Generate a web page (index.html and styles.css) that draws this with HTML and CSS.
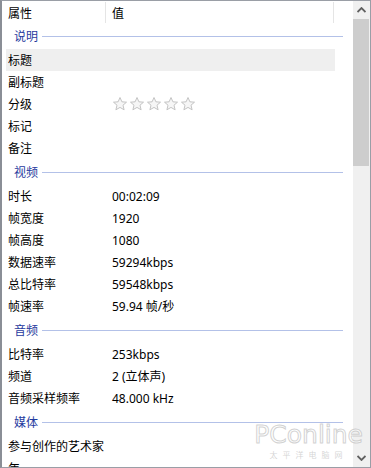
FILE: index.html
```html
<!DOCTYPE html>
<html lang="zh-CN">
<head>
  <meta charset="UTF-8">
  <title>属性 - 详细信息</title>
  <link rel="stylesheet" href="styles.css">
</head>
<body>
  <div class="details">
    <div class="list">
      <!-- 表头 -->
      <div class="list-header">
        <div class="col-name">属性</div>
        <div class="col-value">值</div>
      </div>

      <div class="group"><span>说明</span><i></i></div>
      <div class="row selected"><div class="name">标题</div><div class="value"></div></div>
      <div class="row"><div class="name">副标题</div><div class="value"></div></div>
      <div class="row">
        <div class="name">分级</div>
        <div class="value stars">
          <svg viewBox="0 0 16 16"><path d="M8 1.5l1.9 4.3 4.6.4-3.5 3 1.1 4.6L8 11.4l-4.1 2.4 1.1-4.6-3.5-3 4.6-.4z"/></svg>
          <svg viewBox="0 0 16 16"><path d="M8 1.5l1.9 4.3 4.6.4-3.5 3 1.1 4.6L8 11.4l-4.1 2.4 1.1-4.6-3.5-3 4.6-.4z"/></svg>
          <svg viewBox="0 0 16 16"><path d="M8 1.5l1.9 4.3 4.6.4-3.5 3 1.1 4.6L8 11.4l-4.1 2.4 1.1-4.6-3.5-3 4.6-.4z"/></svg>
          <svg viewBox="0 0 16 16"><path d="M8 1.5l1.9 4.3 4.6.4-3.5 3 1.1 4.6L8 11.4l-4.1 2.4 1.1-4.6-3.5-3 4.6-.4z"/></svg>
          <svg viewBox="0 0 16 16"><path d="M8 1.5l1.9 4.3 4.6.4-3.5 3 1.1 4.6L8 11.4l-4.1 2.4 1.1-4.6-3.5-3 4.6-.4z"/></svg>
        </div>
      </div>
      <div class="row"><div class="name">标记</div><div class="value"></div></div>
      <div class="row"><div class="name">备注</div><div class="value"></div></div>

      <div class="group"><span>视频</span><i></i></div>
      <div class="row"><div class="name">时长</div><div class="value">00:02:09</div></div>
      <div class="row"><div class="name">帧宽度</div><div class="value">1920</div></div>
      <div class="row"><div class="name">帧高度</div><div class="value">1080</div></div>
      <div class="row"><div class="name">数据速率</div><div class="value">59294kbps</div></div>
      <div class="row"><div class="name">总比特率</div><div class="value">59548kbps</div></div>
      <div class="row"><div class="name">帧速率</div><div class="value">59.94 帧/秒</div></div>

      <div class="group"><span>音频</span><i></i></div>
      <div class="row"><div class="name">比特率</div><div class="value">253kbps</div></div>
      <div class="row"><div class="name">频道</div><div class="value">2 (立体声)</div></div>
      <div class="row"><div class="name">音频采样频率</div><div class="value">48.000 kHz</div></div>

      <div class="group"><span>媒体</span><i></i></div>
      <div class="row"><div class="name">参与创作的艺术家</div><div class="value"></div></div>
      <div class="row"><div class="name">年</div><div class="value"></div></div>
    </div>

    <div class="scrollbar">
      <div class="arrow">
        <svg viewBox="0 0 9 6"><path d="M0.5 5L4.5 1L8.5 5"/></svg>
      </div>
      <div class="thumb"></div>
      <div class="track"></div>
      <div class="arrow">
        <svg viewBox="0 0 9 6"><path d="M0.5 1L4.5 5L8.5 1"/></svg>
      </div>
    </div>

    <!-- 水印 -->
    <div class="watermark">
      <div class="wm-logo">PConline</div>
      <div class="wm-sub">太平洋电脑网</div>
    </div>
  </div>
</body>
</html>
```

FILE: styles.css
```css
html, body {
  margin: 0;
  padding: 0;
  background: #fff;
  overflow: hidden;
}

body {
  font-family: "Segoe UI", "Noto Sans", "Noto Sans CJK SC", sans-serif;
  font-size: 12px;
  color: #000;
}

.details {
  position: relative;
  width: 371px;
  height: 468px;
  box-sizing: border-box;
  border: 1px solid #9a9ea6;
  border-left: 2px solid #8a8e96;
  display: flex;
  overflow: hidden;
}

.list {
  flex: 1;
  overflow: hidden;
  margin-left: -1px;
}

/* 表头 */
.list-header {
  display: flex;
  height: 22px;
  align-items: stretch;
}
.list-header > div {
  display: flex;
  align-items: center;
  border-right: 1px solid #e5e5e5;
  margin-top: 1px;
}
.col-name {
  width: 97px;
  padding-left: 7px;
}
.col-value {
  width: 221px;
  padding-left: 6px;
}

/* 分组 */
.group {
  display: flex;
  align-items: center;
  height: 26px;
  padding-left: 13px;
  margin-right: 10px;
  color: #1f3a9e;
}
.group i {
  flex: 1;
  height: 1px;
  margin-left: 4px;
  background: #b3c1e8;
}

/* 行 */
.row {
  display: flex;
  align-items: center;
  height: 22px;
  margin-left: 5px;
  width: 329px;
}
.row.selected {
  background: #efefef;
}
.row .name {
  width: 104px;
  padding-left: 2px;
  white-space: nowrap;
}
.row .value {
  white-space: nowrap;
}

.stars {
  display: flex;
  gap: 1px;
  margin-left: 0;
}
.stars svg {
  width: 16px;
  height: 16px;
  fill: #f6f6f6;
  stroke: #c4c4c4;
  stroke-width: 1;
  stroke-linejoin: round;
}

/* 滚动条 */
.scrollbar {
  width: 17px;
  display: flex;
  flex-direction: column;
  background: #f0f0f0;
}
.scrollbar .arrow {
  height: 18px;
  display: flex;
  align-items: center;
  justify-content: center;
}
.scrollbar .arrow svg {
  width: 9px;
  height: 6px;
  fill: none;
  stroke: #606060;
  stroke-width: 1.8;
}
.scrollbar .thumb {
  height: 147px;
  background: #cdcdcd;
  margin-right: 1px;
}
.scrollbar .track {
  flex: 1;
}

/* 水印 */
.watermark {
  position: absolute;
  right: 7px;
  bottom: 6px;
  text-align: center;
  pointer-events: none;
}
.wm-logo {
  font-family: "DejaVu Sans", sans-serif;
  font-size: 25px;
  line-height: 24px;
  letter-spacing: 0;
  color: rgba(255, 255, 255, 0.7);
  -webkit-text-stroke: 1px rgba(180, 180, 180, 0.6);
}
.wm-sub {
  font-family: "Noto Sans CJK SC", sans-serif;
  font-size: 8px;
  line-height: 12px;
  margin-top: 2px;
  letter-spacing: 5px;
  color: rgba(170, 170, 170, 0.5);
}
```
